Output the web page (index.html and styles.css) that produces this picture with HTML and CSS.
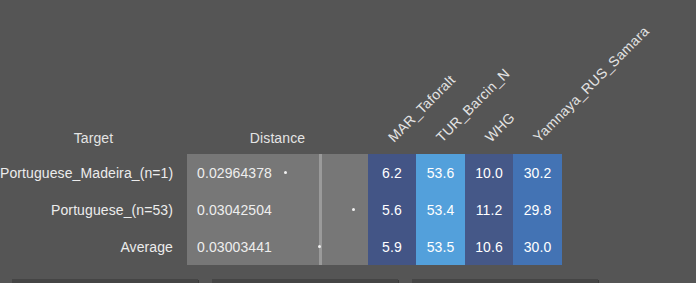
FILE: index.html
```html
<!DOCTYPE html>
<html>
<head>
<meta charset="utf-8">
<link rel="stylesheet" href="styles.css">
</head>
<body>
<table class="grid">
  <colgroup>
    <col class="c-target"><col class="c-dist"><col class="c-v48"><col class="c-v49"><col class="c-v48"><col class="c-v49">
  </colgroup>
  <thead>
    <tr class="head">
      <th class="h-plain">Target</th>
      <th class="h-plain">Distance</th>
      <th class="h-rot"><div class="rot">MAR_Taforalt</div></th>
      <th class="h-rot"><div class="rot">TUR_Barcin_N</div></th>
      <th class="h-rot"><div class="rot">WHG</div></th>
      <th class="h-rot"><div class="rot">Yamnaya_RUS_Samara</div></th>
    </tr>
  </thead>
  <tbody>
    <tr>
      <td class="label">Portuguese_Madeira_(n=1)</td>
      <td class="dist"><div class="dist-in"><span class="num">0.02964378</span><div class="plot"><span class="avg"></span><span class="dot" style="left:9px"></span></div></div></td>
      <td class="v mar">6.2</td><td class="v tur">53.6</td><td class="v whg">10.0</td><td class="v yam">30.2</td>
    </tr>
    <tr>
      <td class="label">Portuguese_(n=53)</td>
      <td class="dist"><div class="dist-in"><span class="num">0.03042504</span><div class="plot"><span class="avg"></span><span class="dot" style="left:77px"></span></div></div></td>
      <td class="v mar">5.6</td><td class="v tur">53.4</td><td class="v whg">11.2</td><td class="v yam">29.8</td>
    </tr>
    <tr>
      <td class="label">Average</td>
      <td class="dist"><div class="dist-in"><span class="num">0.03003441</span><div class="plot"><span class="avg"></span><span class="dot" style="left:43px"></span></div></div></td>
      <td class="v mar">5.9</td><td class="v tur">53.5</td><td class="v whg">10.6</td><td class="v yam">30.0</td>
    </tr>
  </tbody>
</table>
<div class="bars">
  <div class="bar"></div>
  <div class="bar"></div>
  <div class="bar"></div>
</div>
</body>
</html>
```
FILE: styles.css
```css
html, body {
  margin: 0;
  padding: 0;
  background: #555555;
  font-family: "Liberation Sans", Arial, sans-serif;
  font-size: 14px;
  line-height: 16px;
  letter-spacing: 0.1px;
  color: #e8e8e8;
  overflow: hidden;
}
th, td {
  padding: 0;
}
.grid {
  border-collapse: collapse;
  border-spacing: 0;
  table-layout: fixed;
  width: 562px;
}
.c-target { width: 187px; }
.c-dist { width: 181px; }
.c-v48 { width: 48px; }
.c-v49 { width: 49px; }
.head th {
  height: 154px;
  vertical-align: bottom;
  font-weight: normal;
  padding-bottom: 8px;
  box-sizing: border-box;
}
.head .h-plain {
  text-align: center;
  color: #e4e4e4;
}
.head .h-rot {
  text-align: left;
  padding-left: 26px;
}
.rot {
  width: 0;
  white-space: nowrap;
  color: #e4e4e4;
  letter-spacing: 0.25px;
  transform: rotate(-45deg);
  transform-origin: 0 13px;
}
.grid tbody td {
  height: 37px;
  vertical-align: middle;
}
.grid .label {
  text-align: right;
  padding-right: 14px;
  white-space: nowrap;
  color: #ececec;
}
.dist {
  background: #777777;
}
.dist-in {
  display: flex;
  height: 37px;
  align-items: center;
  padding-left: 10px;
}
.num {
  width: 78px;
  color: #eeeeee;
}
.plot {
  position: relative;
  flex: 1;
  align-self: stretch;
}
.avg {
  position: absolute;
  left: 44px;
  top: 0;
  bottom: 0;
  width: 3px;
  background: #9a9a9a;
}
.dot {
  position: absolute;
  top: 17px;
  width: 3px;
  height: 3px;
  border-radius: 50%;
  background: #f2f2f2;
}
.v {
  text-align: center;
  color: #ffffff;
}
.mar { background: #435586; }
.tur { background: #53a0db; }
.whg { background: #455888; }
.yam { background: #4373b4; }
.bars {
  display: flex;
  gap: 14px;
  padding-left: 12px;
  margin-top: 14px;
}
.bar {
  width: 186px;
  height: 12px;
  background: #454545;
  box-shadow: 1px 1px 0 #3a3a3a;
}
```
